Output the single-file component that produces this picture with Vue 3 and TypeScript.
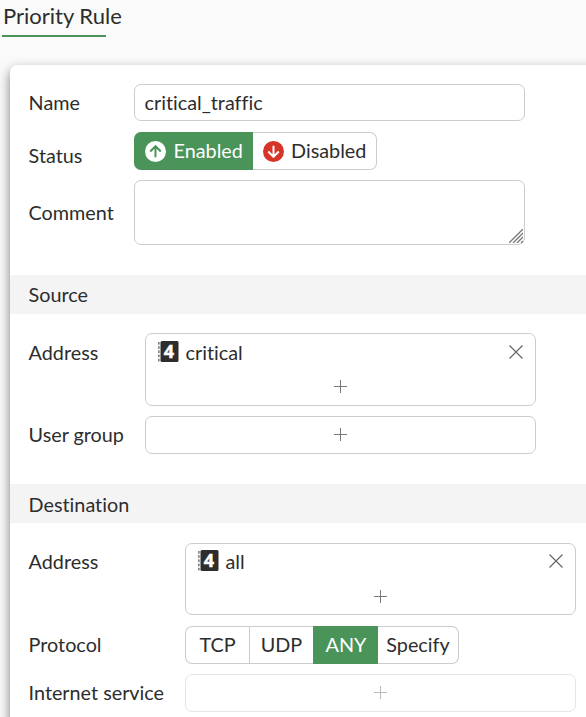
<script setup lang="ts">
import { ref } from 'vue'

const ruleName = ref('critical_traffic')
const comment = ref('')
const status = ref<'enabled' | 'disabled'>('enabled')
const protocols = ['TCP', 'UDP', 'ANY', 'Specify'] as const
const protocol = ref<(typeof protocols)[number]>('ANY')
const sources = ref(['critical'])
const destinations = ref(['all'])
</script>

<template>
  <main class="page">
    <header class="header"><h1>Priority Rule</h1></header>

    <form class="panel" @submit.prevent>
      <section class="group general">
        <div class="row name-row">
          <label for="name">Name</label>
          <input id="name" v-model="ruleName" class="box" type="text" spellcheck="false" />
        </div>
        <div class="row status-row">
          <label>Status</label>
          <div class="segments">
            <button type="button" class="state" :class="{ active: status === 'enabled' }" @click="status = 'enabled'">
              <svg class="state-icon" viewBox="0 0 21 21">
                <circle cx="10.5" cy="10.5" r="10.5" fill="#fff" />
                <path d="M10.5 16.2V5.4M5.2 10.5l5.3-5.3 5.3 5.3" fill="none" stroke="#4a9359" stroke-width="2" />
              </svg>
              <span>Enabled</span>
            </button>
            <button type="button" class="state" :class="{ active: status === 'disabled' }" @click="status = 'disabled'">
              <svg class="state-icon" viewBox="0 0 21 21">
                <circle cx="10.5" cy="10.5" r="10.5" fill="#d63426" />
                <path d="M10.5 4.8v10.8M5.2 10.5l5.3 5.3 5.3-5.3" fill="none" stroke="#fff" stroke-width="2" />
              </svg>
              <span>Disabled</span>
            </button>
          </div>
        </div>
        <div class="row comment-row">
          <label for="comment">Comment</label>
          <div class="box comment">
            <textarea id="comment" v-model="comment"></textarea>
            <svg class="grip" viewBox="0 0 14 14">
              <path d="M0 14L14 0M4 14L14 4M8 14l6-6M12 14l2-2" stroke="#777" stroke-width="1.3" />
            </svg>
          </div>
        </div>
      </section>

      <h2>Source</h2>
      <section class="group source">
        <div class="row">
          <label>Address</label>
          <div class="box picker tall">
            <div v-for="item in sources" :key="item" class="entry">
              <svg class="addr-icon" viewBox="0 0 21 21">
                <path d="M.9 1v19.5" stroke="#2d2d2d" stroke-width="1" stroke-dasharray="2.6 1.6" />
                <rect x="2.5" y="0" width="18" height="21" rx="1.5" fill="#2d2d2d" />
                <text class="digit" x="11" y="16.5">4</text>
              </svg>
              <span>{{ item }}</span>
              <svg class="remove" viewBox="0 0 14 14"><path d="M.5.5l13 13M13.5.5l-13 13" stroke="#666" stroke-width="1.2" /></svg>
            </div>
            <svg class="plus" viewBox="0 0 13 13"><path d="M0 6.5h13M6.5 0v13" stroke="#777" /></svg>
          </div>
        </div>
        <div class="row">
          <label>User group</label>
          <div class="box picker">
            <svg class="plus" viewBox="0 0 13 13"><path d="M0 6.5h13M6.5 0v13" stroke="#777" /></svg>
          </div>
        </div>
      </section>

      <h2 class="lower">Destination</h2>
      <section class="group destination">
        <div class="row">
          <label>Address</label>
          <div class="box picker tall">
            <div v-for="item in destinations" :key="item" class="entry">
              <svg class="addr-icon" viewBox="0 0 21 21">
                <path d="M.9 1v19.5" stroke="#2d2d2d" stroke-width="1" stroke-dasharray="2.6 1.6" />
                <rect x="2.5" y="0" width="18" height="21" rx="1.5" fill="#2d2d2d" />
                <text class="digit" x="11" y="16.5">4</text>
              </svg>
              <span>{{ item }}</span>
              <svg class="remove" viewBox="0 0 14 14"><path d="M.5.5l13 13M13.5.5l-13 13" stroke="#666" stroke-width="1.2" /></svg>
            </div>
            <svg class="plus" viewBox="0 0 13 13"><path d="M0 6.5h13M6.5 0v13" stroke="#777" /></svg>
          </div>
        </div>
        <div class="row protocol-row">
          <label>Protocol</label>
          <div class="segments protocols">
            <button v-for="p in protocols" :key="p" type="button" :class="{ active: protocol === p }" @click="protocol = p">{{ p }}</button>
          </div>
        </div>
        <div class="row">
          <label>Internet service</label>
          <div class="box picker disabled">
            <svg class="plus" viewBox="0 0 13 13"><path d="M0 6.5h13M6.5 0v13" stroke="#777" /></svg>
          </div>
        </div>
      </section>
    </form>
  </main>
</template>

<style>
body {
  overflow: hidden;
  background: #fafafa;
}
</style>

<style scoped>
* {
  box-sizing: border-box;
}
.page {
  height: 717px;
  overflow: hidden;
  background: #fafafa;
  color: #2d2d2d;
  font: 19.8px/24px Lato, sans-serif;
  font-variant-ligatures: none;
}
.header {
  height: 65px;
  padding: 3px 0 0 2px;
}
h1 {
  width: 104px;
  height: 34px;
  margin: 0;
  border-bottom: 2px solid #4a9359;
  font-size: 22px;
  font-weight: 400;
  line-height: 25px;
  text-indent: 1px;
  white-space: nowrap;
}
.panel {
  width: 620px;
  min-height: 680px;
  margin-left: 10px;
  border-radius: 7px;
  background: #fff;
  box-shadow: 0 5px 12px rgba(0, 0, 0, 0.5);
}
.group {
  display: flex;
  flex-direction: column;
  gap: 10px;
  padding: 19px 18px 30px;
}
.row {
  display: grid;
  grid-template-columns: 106px 391px;
  align-items: center;
}
.source .row {
  grid-template-columns: 117px 391px;
}
.destination {
  padding-top: 20px;
}
.destination .row {
  grid-template-columns: 157px 391px;
}
label {
  padding: 0 0 2px 0.6px;
}
.name-row {
  margin-bottom: 1px;
}
.protocol-row {
  margin-top: 1px;
}
.status-row label {
  padding-top: 10px;
}
h2 {
  height: 39px;
  margin: 0;
  padding-left: 18.6px;
  background: #f4f4f4;
  font-size: inherit;
  font-weight: 400;
  line-height: 38px;
}
h2.lower {
  line-height: 40px;
}
.box {
  width: 391px;
  border: 1px solid #ccc;
  border-radius: 7px;
  background: #fff;
}
input {
  height: 37px;
  padding: 0 9.5px 2px;
  color: inherit;
  font: inherit;
  font-variant-ligatures: none;
  outline: 0;
}
.comment {
  position: relative;
  height: 65px;
}
textarea {
  display: block;
  width: 100%;
  height: 100%;
  padding: 6px 9px;
  border: 0;
  outline: 0;
  background: transparent;
  font: inherit;
  resize: none;
}
.grip {
  position: absolute;
  right: 1px;
  bottom: 1px;
  width: 14px;
  height: 14px;
}
.segments {
  display: flex;
  width: max-content;
  height: 38px;
}
button {
  display: flex;
  align-items: center;
  justify-content: center;
  padding: 0 0 2px;
  border: 1px solid #ccc;
  border-right-width: 0;
  background: #fff;
  color: inherit;
  font: inherit;
  font-variant-ligatures: none;
}
button:first-child {
  border-radius: 7px 0 0 7px;
}
button:last-child {
  border-right-width: 1px;
  border-radius: 0 7px 7px 0;
}
button.active {
  border-color: #4a9359;
  background: #4a9359;
  color: #fff;
}
button.active + button {
  border-left-width: 0;
}
.state {
  gap: 7.5px;
  width: 119px;
  padding: 0;
}
.state span {
  padding-bottom: 2px;
}
.state:last-child {
  width: 124px;
}
.state-icon {
  width: 21px;
  height: 21px;
}
.protocols button {
  width: 64px;
}
.protocols button:nth-child(3) {
  width: 65px;
}
.protocols button:last-child {
  width: 81px;
}
.picker {
  display: flex;
  flex-direction: column;
  align-items: center;
  justify-content: center;
  height: 38px;
  padding-bottom: 1px;
}
.picker.tall {
  justify-content: flex-start;
  height: 73px;
}
.destination .tall {
  height: 72px;
}
.row:has(.tall) {
  align-items: start;
}
.row:has(.tall) label {
  padding-top: 7px;
}
.destination .row:has(.tall) label {
  padding-top: 6px;
}
.entry {
  display: flex;
  align-items: center;
  align-self: stretch;
  height: 36px;
  margin-bottom: 10px;
  padding: 0 12px;
}
.entry span {
  padding-bottom: 1px;
}
.destination .entry {
  height: 34px;
  margin-bottom: 12px;
}
.addr-icon {
  width: 21px;
  height: 21px;
  margin: 0 6.5px 1px 0;
  overflow: visible;
}
.digit {
  fill: #fff;
  stroke: #fff;
  stroke-width: 0.5px;
  font: 700 18px/1 'Open Sans', sans-serif;
  text-anchor: middle;
}
.remove {
  width: 14px;
  height: 14px;
  margin-left: auto;
}
.plus {
  width: 13px;
  height: 13px;
  flex: none;
}
.disabled {
  opacity: 0.5;
}
</style>
